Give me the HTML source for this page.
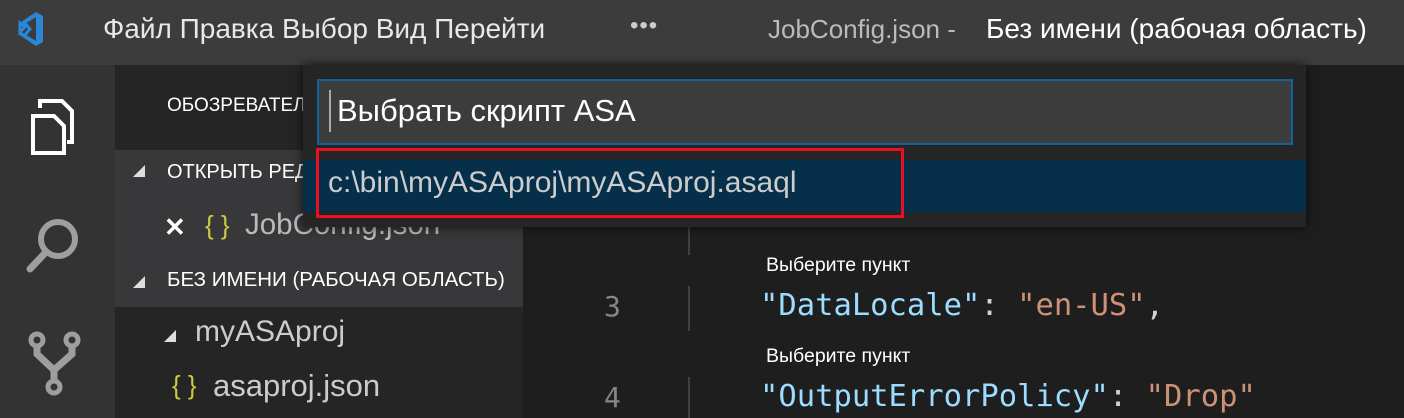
<!DOCTYPE html>
<html><head><meta charset="utf-8"><style>
*{margin:0;padding:0;box-sizing:border-box}
body{width:1404px;height:418px;overflow:hidden;background:#1e1e1e;position:relative;font-family:"Segoe UI","Liberation Sans",sans-serif}
.a{position:absolute;white-space:nowrap}
.t{font-family:"Liberation Sans","Noto Sans CJK SC",sans-serif}
.m{font-family:"DejaVu Sans Mono","Liberation Mono",monospace}
</style></head><body>
<div class="a" style="left:0;top:0;width:1404px;height:65px;background:#3c3c3c"></div>
<svg class="a" style="left:16px;top:10px" width="28" height="38" viewBox="0 0 28 38"><path d="M20 2 L27 6 V32 L20 36 L2 24 L4 21 L20 31 V7 L4 17 L2 14 Z" fill="#2a86d6"/><path d="M4 13 L9 17 L4 22 Z M8 12 L14 19 L8 26" fill="none" stroke="#2a86d6" stroke-width="3"/></svg>
<div class="a t" style="left:103px;top:13px;font-size:28px;color:#e8e8e8">Файл Правка Выбор Вид Перейти</div>
<div class="a" style="left:630px;top:12px;font-size:24px;color:#ccc;letter-spacing:1px">•••</div>
<div class="a" style="left:768px;top:14px;font-size:26px;color:#bbb">JobConfig.json -</div>
<div class="a t" style="left:986px;top:13px;font-size:28px;color:#fff">Без имени (рабочая область)</div>

<div class="a" style="left:0;top:65px;width:115px;height:353px;background:#333"></div>
<svg class="a" style="left:30px;top:98px" width="50" height="58" viewBox="0 0 50 58"><path d="M10 10 V3 H32 L42 13 V44 H37" fill="none" stroke="#fff" stroke-width="4"/><path d="M3 18 H24 L34 28 V55 H3 Z" fill="none" stroke="#fff" stroke-width="4"/></svg>
<svg class="a" style="left:24px;top:212px" width="64" height="66" viewBox="0 0 64 66"><circle cx="34" cy="27" r="17" fill="none" stroke="#9e9e9e" stroke-width="6"/><path d="M22 40 L6 57" stroke="#9e9e9e" stroke-width="7" stroke-linecap="round"/></svg>
<svg class="a" style="left:28px;top:330px" width="56" height="70" viewBox="0 0 56 70"><circle cx="9" cy="10" r="6" fill="none" stroke="#9e9e9e" stroke-width="5"/><circle cx="44" cy="10" r="6" fill="none" stroke="#9e9e9e" stroke-width="5"/><circle cx="26" cy="57" r="6" fill="none" stroke="#9e9e9e" stroke-width="5"/><path d="M9 16 V24 L26 40 L44 24 V16 M26 40 V51" fill="none" stroke="#9e9e9e" stroke-width="7"/></svg>

<div class="a" style="left:115px;top:65px;width:408px;height:85px;background:#252526"></div>
<div class="a" style="left:115px;top:150px;width:408px;height:157px;background:#38383b"></div>
<div class="a" style="left:115px;top:307px;width:408px;height:111px;background:#252526"></div>
<div class="a t" style="left:167px;top:95px;font-size:19px;color:#fff">ОБОЗРЕВАТЕЛЬ</div>
<div class="a" style="left:133px;top:165px;width:0;height:0;border-left:12px solid transparent;border-bottom:12px solid #ddd"></div>
<div class="a t" style="left:167px;top:161px;font-size:20px;color:#fff">ОТКРЫТЬ РЕДАКТОРЫ</div>
<div class="a" style="left:164px;top:212px;font-size:26px;color:#fff;font-weight:bold">✕</div>
<div class="a" style="left:205px;top:210px;font-size:26px;color:#cbcb41">{ }</div>
<div class="a" style="left:245px;top:208px;font-size:29.5px;color:#bbb">JobConfig.json</div>
<div class="a" style="left:133px;top:276px;width:0;height:0;border-left:12px solid transparent;border-bottom:12px solid #ddd"></div>
<div class="a t" style="left:167px;top:268px;font-size:20.5px;color:#fff">БЕЗ ИМЕНИ (РАБОЧАЯ ОБЛАСТЬ)</div>
<div class="a" style="left:164px;top:330px;width:0;height:0;border-left:12px solid transparent;border-bottom:12px solid #ddd"></div>
<div class="a" style="left:195px;top:315px;font-size:30px;color:#ccc">myASAproj</div>
<div class="a" style="left:172px;top:370px;font-size:26px;color:#cbcb41">{ }</div>
<div class="a" style="left:213px;top:368px;font-size:31px;color:#ccc">asaproj.json</div>

<div class="a" style="left:688px;top:225px;width:2px;height:30px;background:#404040"></div>
<div class="a" style="left:688px;top:286px;width:2px;height:45px;background:#404040"></div>
<div class="a" style="left:688px;top:377px;width:2px;height:41px;background:#404040"></div>
<div class="a m" style="left:604px;top:290px;font-size:28px;color:#858585">3</div>
<div class="a m" style="left:604px;top:381px;font-size:28px;color:#858585">4</div>
<div class="a t" style="left:766px;top:254px;font-size:19.5px;color:#fff">Выберите пункт</div>
<div class="a t" style="left:766px;top:345px;font-size:19.5px;color:#fff">Выберите пункт</div>
<div class="a m" style="left:760px;top:288px;font-size:30.5px;color:#d4d4d4"><span style="color:#9cdcfe">"DataLocale"</span>: <span style="color:#ce9178">"en-US"</span>,</div>
<div class="a m" style="left:760px;top:379px;font-size:30.5px;color:#d4d4d4"><span style="color:#9cdcfe">"OutputErrorPolicy"</span>: <span style="color:#ce9178">"Drop"</span></div>

<div class="a" style="left:303px;top:65px;width:1003px;height:162px;background:#252526;box-shadow:0 0 10px rgba(0,0,0,.7)"></div>
<div class="a" style="left:317px;top:79px;width:976px;height:66px;background:#3c3c3c;border:2px solid #0e639c"></div>
<div class="a" style="left:329px;top:90px;width:2px;height:42px;background:#aaa"></div>
<div class="a t" style="left:337px;top:93px;font-size:31px;color:#fff">Выбрать скрипт ASA</div>
<div class="a" style="left:303px;top:160px;width:1003px;height:52px;background:#062f4a"></div>
<div class="a" style="left:316px;top:148px;width:588px;height:70px;border:3px solid #e81123"></div>
<div class="a" style="left:328px;top:166px;font-size:30px;color:#ccc">c:\bin\myASAproj\myASAproj.asaql</div>
</body></html>
